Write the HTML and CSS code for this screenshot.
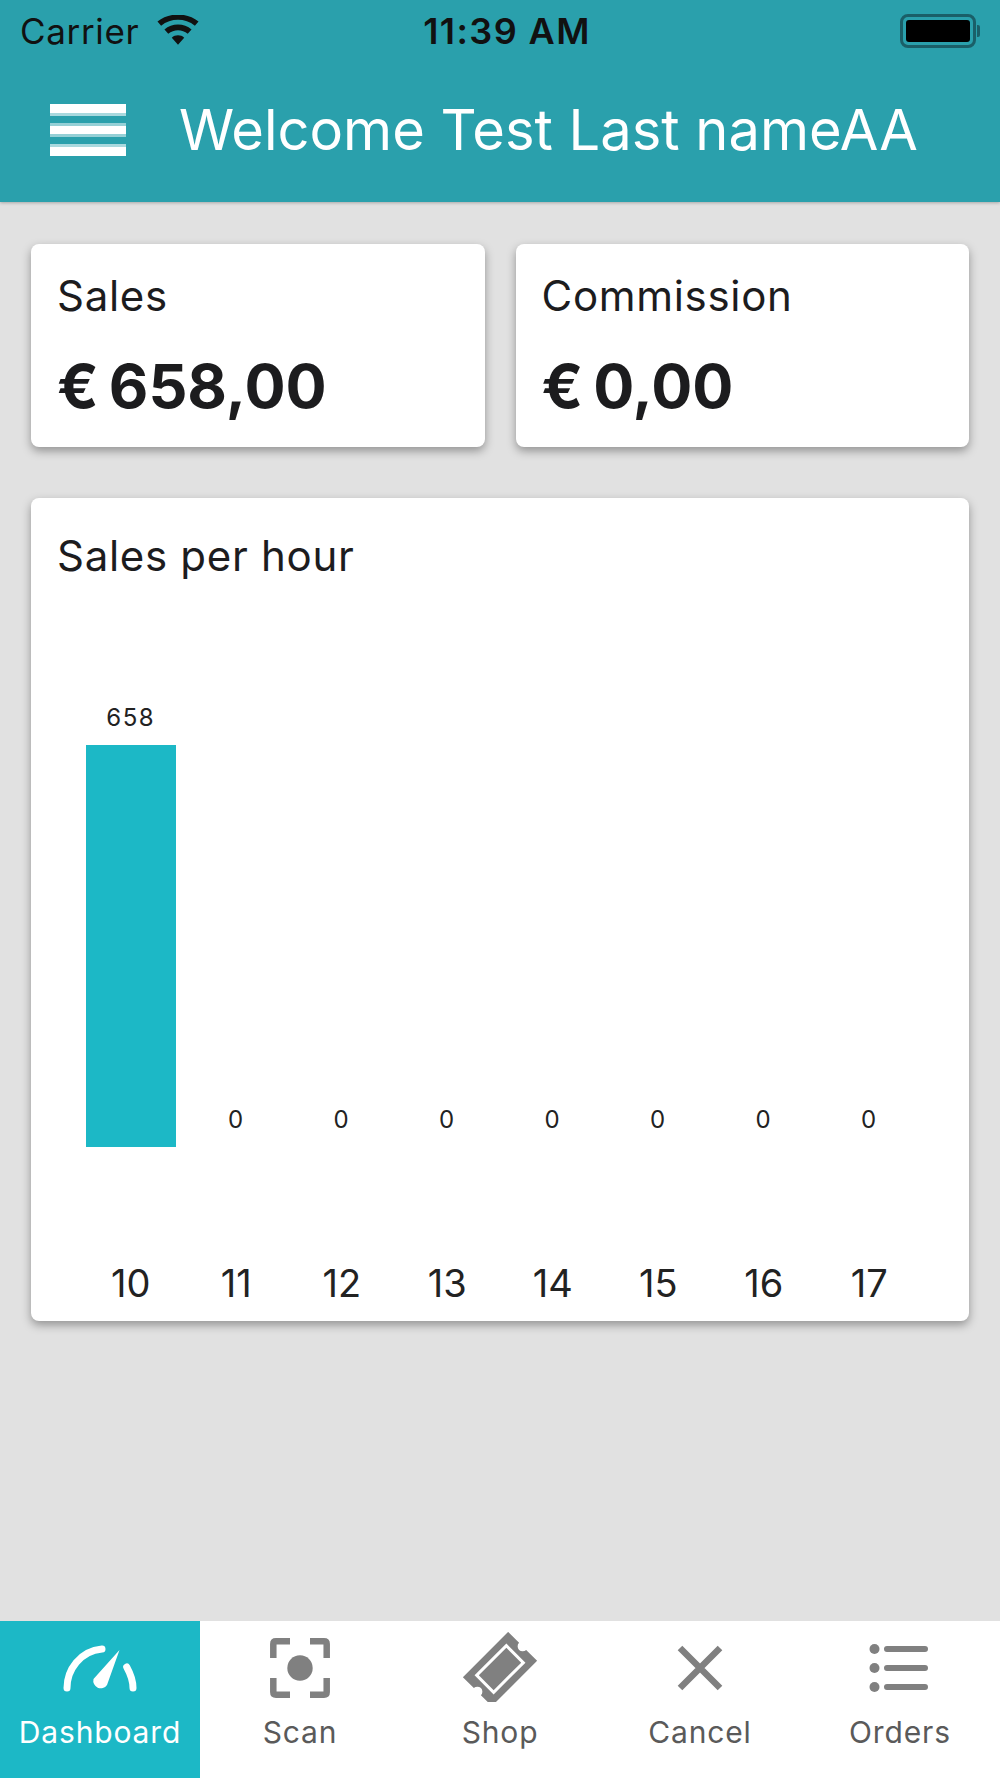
FILE: index.html
```html
<!DOCTYPE html>
<html lang="en">
<head>
<meta charset="utf-8">
<title>Dashboard</title>
<link rel="stylesheet" href="styles.css">
</head>
<body>
<div class="app">
  <header class="header">
    <div class="status">
      <div class="status-left"><span>Carrier</span>
        <svg class="wifi" viewBox="0 0 44 32"><path d="M22 31 L15.5 23.5 C19 20.2 25 20.2 28.5 23.5 Z M11.8 19.5 L7.8 15 C15.5 8 28.5 8 36.2 15 L32.2 19.5 C26.5 14.5 17.5 14.5 11.8 19.5 Z M4.3 11 L0.5 6.6 C12.5 -3.2 31.5 -3.2 43.5 6.6 L39.7 11 C29.5 2.8 14.5 2.8 4.3 11 Z"/></svg>
      </div>
      <div class="status-time">11:39 AM</div>
      <div class="status-right">
        <div class="battery"><div class="battery-fill"></div></div><div class="battery-tip"></div>
      </div>
    </div>
    <div class="toolbar">
      <div class="hamburger"><i></i><i></i><i></i></div>
      <div class="title">Welcome Test Last nameAA</div>
    </div>
  </header>
  <main class="content">
    <div class="stats">
      <section class="card stat"><h2 class="card-title">Sales</h2><div class="amount">€<span>658,00</span></div></section>
      <section class="card stat"><h2 class="card-title">Commission</h2><div class="amount">€<span>0,00</span></div></section>
    </div>
    <section class="card chart-card">
      <h2 class="card-title">Sales per hour</h2>
      <div class="chart">
        <div class="col"><div class="val">658</div><div class="bar"></div><div class="hour">10</div></div>
        <div class="col"><div class="val">0</div><div class="hour">11</div></div>
        <div class="col"><div class="val">0</div><div class="hour">12</div></div>
        <div class="col"><div class="val">0</div><div class="hour">13</div></div>
        <div class="col"><div class="val">0</div><div class="hour">14</div></div>
        <div class="col"><div class="val">0</div><div class="hour">15</div></div>
        <div class="col"><div class="val">0</div><div class="hour">16</div></div>
        <div class="col"><div class="val">0</div><div class="hour">17</div></div>
      </div>
    </section>
  </main>
  <nav class="tabs">
    <div class="tab active">
      <svg viewBox="0 0 100 70"><path class="line" d="M17 56 C17 38 30 19 52 17"/><path class="line" d="M76.7 35 C80 41 83 48 83 56"/><path d="M69.5 18 L57 53 A7.5 7.5 0 0 1 43.5 47 Z"/></svg>
      <span>Dashboard</span>
    </div>
    <div class="tab">
      <svg viewBox="0 0 100 70"><path class="line" d="M23.3 26 V12 Q23.3 9.3 26 9.3 H40 M60 9.3 H74 Q76.7 9.3 76.7 12 V26 M76.7 46 V60 Q76.7 62.7 74 62.7 H60 M40 62.7 H26 Q23.3 62.7 23.3 60 V46"/><circle cx="50" cy="36" r="12.7"/></svg>
      <span>Scan</span>
    </div>
    <div class="tab">
      <svg viewBox="0 0 100 70"><g transform="rotate(-45 50 37)"><path d="M18 16.5 H82 V32 A5 5 0 0 0 82 42 V57.5 H18 V42 A5 5 0 0 0 18 32 Z"/><rect class="ticket-inner" x="29" y="25" width="42" height="24"/></g></svg>
      <span>Shop</span>
    </div>
    <div class="tab">
      <svg viewBox="0 0 100 70"><path class="line" d="M30 16 L70 56 M70 16 L30 56"/></svg>
      <span>Cancel</span>
    </div>
    <div class="tab">
      <svg viewBox="0 0 100 70"><circle cx="24.5" cy="17" r="5"/><circle cx="24.5" cy="36" r="5"/><circle cx="24.5" cy="55" r="5"/><path class="line round" d="M37 17 H75 M37 36 H75 M37 55 H75"/></svg>
      <span>Orders</span>
    </div>
  </nav>
</div>
</body>
</html>
```
FILE: styles.css
```css
* { box-sizing: border-box; }
html, body { margin: 0; padding: 0; }
body { font-family: Inter, Roboto, "Liberation Sans", sans-serif; background: #e1e1e1; }
.app { width: 1000px; height: 1778px; display: flex; flex-direction: column; overflow: hidden; }
.header { height: 202px; background: #2aa0ac; color: #fff; display: flex; flex-direction: column; box-shadow: 0 1px 3px rgba(0,0,0,.25); }
.status { height: 62px; padding: 0 20px; display: grid; grid-template-columns: 1fr auto 1fr; align-items: center; color: #111; font-size: 35px; letter-spacing: .65px; }
.status-left { display: flex; align-items: center; gap: 18px; }
.wifi { width: 42px; height: 31px; fill: #111; margin-top: -2px; }
.status-time { font-size: 36px; font-weight: 600; letter-spacing: 1.4px; margin-left: 14px; }
.status-right { display: flex; justify-content: flex-end; align-items: center; }
.battery { width: 76px; height: 34px; border: 3px solid #1a5f68; border-radius: 8px; padding: 3px; }
.battery-fill { height: 100%; background: #000; border-radius: 3px; }
.battery-tip { width: 3px; height: 12px; background: #1a5f68; border-radius: 0 2px 2px 0; margin-left: 1px; }
.toolbar { flex: 1; display: flex; align-items: center; padding: 0 0 4px 50px; }
.hamburger { width: 76px; height: 52px; display: flex; flex-direction: column; justify-content: space-between; margin-right: 53px; }
.hamburger i { display: block; background: #fff; height: 12px; }
.hamburger i:nth-child(1) { border-bottom: 3px solid rgba(255,255,255,.6); background-clip: padding-box; }
.hamburger i:nth-child(2) { height: 14px; border-top: 3px solid rgba(255,255,255,.5); border-bottom: 3px solid rgba(255,255,255,.5); background-clip: padding-box; }
.hamburger i:nth-child(3) { border-top: 3px solid rgba(255,255,255,.6); background-clip: padding-box; }
.title { font-size: 56px; white-space: nowrap; }
.content { flex: 1; padding: 42px 31px 0; }
.stats { display: flex; gap: 31px; margin-bottom: 51px; }
.card { background: #fff; border-radius: 8px; box-shadow: 0 4px 10px rgba(0,0,0,.35); padding: 27px 26px; color: #1c1c1e; }
.stat { flex: 1; height: 203px; }
.card-title { margin: 0; font-size: 42px; font-weight: 400; line-height: 50px; letter-spacing: .7px; }
.amount { font-size: 61px; font-weight: 700; margin-top: 28px; line-height: 74px; display: flex; gap: 10px; }
.chart-card { height: 823px; padding-top: 33px; }
.chart { display: flex; padding: 0 21px; margin-top: 118px; height: 606px; }
.col { width: 105.5px; display: flex; flex-direction: column; align-items: center; justify-content: flex-end; color: #222; }
.val { font-size: 24px; line-height: 30px; margin-bottom: 12px; letter-spacing: 1.5px; }
.bar { width: 90px; height: 402px; background: #1cb8c6; }
.hour { font-size: 38px; line-height: 44px; margin-top: 114px; }
.tabs { height: 157px; background: #fff; display: flex; }
.tab { flex: 1; display: flex; flex-direction: column; align-items: center; padding-top: 11px; color: #5a5a5a; font-size: 30px; letter-spacing: .85px; }
.tab svg { width: 100px; height: 70px; fill: #808080; margin-bottom: 11px; flex: none; }
.tab .line { fill: none; stroke: #808080; stroke-width: 6.5; }
.tab .round { stroke-linecap: round; stroke-width: 6; }
.tab .ticket-inner { stroke: #fff; stroke-width: 3; }
.tab span { line-height: 38px; }
.tab.active { background: #1cb8c6; color: #fff; }
.tab.active svg { fill: #fff; }
.tab.active .line { stroke: #fff; stroke-linecap: round; stroke-width: 7; }
```
